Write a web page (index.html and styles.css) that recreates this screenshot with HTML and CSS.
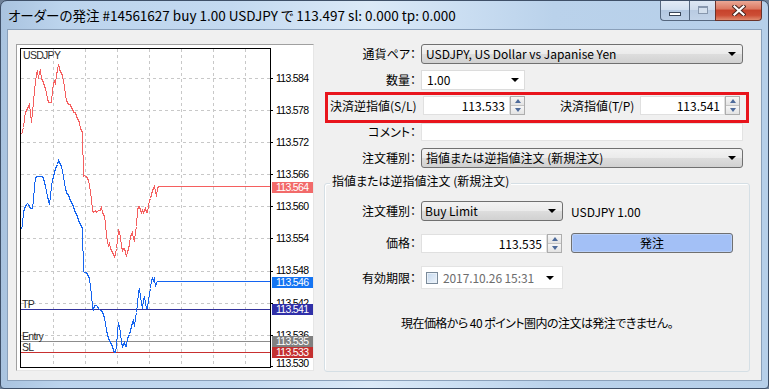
FILE: index.html
```html
<!DOCTYPE html>
<html lang="ja">
<head>
<meta charset="utf-8">
<title>オーダーの発注</title>
<link rel="stylesheet" href="styles.css">
</head>
<body>
<div class="window">
  <div class="titlebar">
    <span class="title">オーダーの発注 #14561627 buy 1.00 USDJPY で 113.497 sl: 0.000 tp: 0.000</span>
    <div class="caption">
      <div class="cbtn min"><span class="min-ico"></span></div>
      <div class="cbtn max"><span class="max-ico"></span></div>
      <div class="cbtn close">
        <svg width="14" height="11" viewBox="0 0 14 11"><path d="M2.5 1.5 L11.5 9.5 M11.5 1.5 L2.5 9.5" stroke="#4a2620" stroke-width="4.2" stroke-linecap="square"/><path d="M2.5 1.5 L11.5 9.5 M11.5 1.5 L2.5 9.5" stroke="#fff" stroke-width="2.2" stroke-linecap="square"/></svg>
      </div>
    </div>
  </div>
  <div class="client">
    <div class="chart-panel">
      <svg class="chart" width="296" height="325" viewBox="17 45 296 325">
        <defs>
          <clipPath id="c542"><rect x="272" y="290" width="41" height="14"/></clipPath>
          <clipPath id="c536"><rect x="272" y="322" width="41" height="14"/></clipPath>
        </defs>
        <rect x="17" y="45" width="296" height="325" fill="#fff"/>
        <g stroke="#c8c8c8" stroke-dasharray="3 3" shape-rendering="crispEdges">
          <path d="M21 78.5H270M21 110.5H270M21 142.5H270M21 174.5H270M21 206.5H270M21 238.5H270M21 271.5H270M21 303.5H270M21 335.5H270"/>
          <path d="M53.5 49V367M85.5 49V367M117.5 49V367M149.5 49V367M181.5 49V367M213.5 49V367M245.5 49V367"/>
        </g>
        <g stroke="#000" shape-rendering="crispEdges">
          <path d="M270 78.5H273M270 110.5H273M270 142.5H273M270 174.5H273M270 206.5H273M270 238.5H273M270 271.5H273M270 303.5H273M270 335.5H273M270 366.5H273"/>
        </g>
        <g class="axis">
          <text x="276" y="82">113.584</text>
          <text x="276" y="114">113.578</text>
          <text x="276" y="146">113.572</text>
          <text x="276" y="178">113.566</text>
          <text x="276" y="210">113.560</text>
          <text x="276" y="242">113.554</text>
          <text x="276" y="274">113.548</text>
          <text x="276" y="307" clip-path="url(#c542)">113.542</text>
          <text x="276" y="339" clip-path="url(#c536)">113.536</text>
          <text x="276" y="367">113.530</text>
        </g>
        <g shape-rendering="crispEdges" fill="none" stroke-width="1">
          <path d="M21 309.5H270" stroke="#33339c"/>
          <path d="M21 341.5H270" stroke="#8c8c8c"/>
          <path d="M21 352.5H270" stroke="#c83030"/>
        </g>
        <g transform="translate(0.5 0.5)" fill="none" stroke-width="1" shape-rendering="crispEdges">
          <polyline stroke="#f55f5f" points="21,134 23,127 24,118 25,112 27,108 28,106 29,104 30,112 31,122 32,112 33,102 34,90 35,82 36,74 37,70 38,78 39,72 40,70 41,78 42,80 43,82 44,86 45,88 46,92 47,98 48,102 49,102 51,102 52,90 53,84 54,80 55,84 56,74 57,70 58,64 59,68 60,72 61,72 62,76 63,80 64,86 65,94 66,100 67,102 68,104 70,104 71,108 72,108 73,112 75,112 76,116 77,118 78,120 79,122 80,128 81,130 82,132 83,176 84,175 85,176 86,176 87,178 88,180 89,184 90,192 91,198 92,210 93,212 95,210 96,212 98,210 100,210 101,206 102,212 103,214 104,216 105,222 106,236 107,240 108,246 109,242 110,248 111,250 112,252 114,256 115,254 116,248 117,240 118,230 119,232 120,236 121,246 122,250 123,248 124,248 125,252 126,256 127,252 128,248 129,244 130,236 131,234 132,232 133,238 134,240 135,232 136,226 137,210 138,206 139,206 140,210 141,212 142,210 143,212 144,210 145,208 146,212 147,212 148,206 149,200 150,198 151,194 152,190 153,188 154,186 155,190 156,196 157,188 158,186 270,186"/>
          <polyline stroke="#1464f0" points="21,229 22,224 23,212 24,208 25,206 26,204 27,203 28,204 29,206 30,208 32,208 33,200 34,186 35,178 36,176 38,176 40,176 42,176 43,178 44,182 45,186 46,190 47,196 48,200 49,204 50,196 51,186 52,180 53,176 54,172 55,168 56,166 57,164 58,160 59,162 60,164 61,166 62,170 63,176 64,182 65,188 66,192 67,194 68,194 69,198 70,200 71,202 72,204 73,206 74,210 75,212 76,214 77,216 78,220 79,222 80,224 81,226 82,228 83,271 84,272 86,272 87,274 88,276 89,278 90,286 91,294 92,307 93,309 94,305 96,305 97,306 98,308 100,310 101,310 102,312 103,314 104,318 105,322 106,330 107,334 108,338 109,340 110,342 111,344 112,346 113,350 114,352 115,352 116,346 117,332 118,322 119,326 120,332 121,342 122,346 123,344 124,342 125,346 126,346 127,338 128,336 129,334 130,330 131,326 132,322 133,320 134,326 135,318 136,312 137,304 138,292 139,288 140,296 141,302 142,308 143,300 144,296 145,302 146,308 147,308 148,300 149,294 150,288 151,280 152,278 153,280 154,278 155,286 156,282 157,281 270,281"/>
        </g>
        <rect x="20.5" y="48.5" width="250" height="319" fill="none" stroke="#000" shape-rendering="crispEdges"/>
        <g class="mk">
          <rect x="272" y="182" width="41" height="11" fill="#f26a6a"/>
          <text x="276" y="191">113.564</text>
          <rect x="272" y="277" width="41" height="11" fill="#1474f2"/>
          <text x="276" y="286">113.546</text>
          <rect x="272" y="304" width="41" height="11" fill="#3030a8"/>
          <text x="276" y="313">113.541</text>
          <rect x="272" y="336" width="41" height="11" fill="#808080"/>
          <text x="276" y="345">113.535</text>
          <rect x="272" y="347" width="41" height="11" fill="#c43030"/>
          <text x="276" y="356">113.533</text>
        </g>
        <g class="lbls">
          <text x="23" y="59">USDJPY</text>
          <text x="22" y="307.5">TP</text>
          <text x="22" y="340">Entry</text>
          <text x="22" y="351">SL</text>
        </g>
      </svg>
    </div>
    <div class="form">
      <div class="row">
        <span class="lbl">通貨ペア：</span>
        <div class="combo wide"><span>USDJPY, US Dollar vs Japanise Yen</span><i class="arrow"></i></div>
      </div>
      <div class="row r2">
        <span class="lbl">数量：</span>
        <div class="combo edit qty"><span>1.00</span><i class="arrow"></i></div>
      </div>
      <div class="slbox">
        <span class="sl-lbl">決済逆指値(S/L)</span>
        <div class="num sl-in">113.533</div>
        <div class="spin"><b class="up"><i></i></b><b class="dn"><i></i></b></div>
        <span class="tp-lbl">決済指値(T/P)</span>
        <div class="num tp-in">113.541</div>
        <div class="spin"><b class="up"><i></i></b><b class="dn"><i></i></b></div>
      </div>
      <div class="row">
        <span class="lbl">コメント：</span>
        <div class="text-in"></div>
      </div>
      <div class="row r5">
        <span class="lbl">注文種別：</span>
        <div class="combo wide"><span>指値または逆指値注文 (新規注文)</span><i class="arrow"></i></div>
      </div>
      <div class="group">
        <span class="group-title">指値または逆指値注文 (新規注文)</span>
        <div class="row g1">
          <span class="lbl g">注文種別：</span>
          <div class="combo mid"><span>Buy Limit</span><i class="arrow"></i></div>
          <span class="sym">USDJPY 1.00</span>
        </div>
        <div class="row g2">
          <span class="lbl g">価格：</span>
          <div class="num price-in">113.535</div>
          <div class="spin"><b class="up"><i></i></b><b class="dn"><i></i></b></div>
          <div class="btn">発注</div>
        </div>
        <div class="row g3">
          <span class="lbl g">有効期限：</span>
          <div class="date">
            <span class="chk"></span>
            <span class="dtxt">2017.10.26 15:31</span>
            <i class="arrow"></i>
          </div>
        </div>
        <p class="msg">現在価格から 40 ポイント圏内の注文は発注できません。</p>
      </div>
    </div>
  </div>
</div>
</body>
</html>
```

FILE: styles.css
```css
* { box-sizing: border-box; }
html, body { margin: 0; padding: 0; }
body {
  width: 769px;
  height: 389px;
  overflow: hidden;
  background: #6f8198;
  font-family: "Noto Sans CJK JP", sans-serif;
  font-size: 12px;
  color: #000;
  font-feature-settings: "palt";
}
.window {
  width: 769px;
  height: 389px;
  border: 1px solid #3f5068;
  border-radius: 7px 7px 4px 4px;
  background: linear-gradient(to right, #a9c3df 0%, #bcd4ed 8%, #c3d9f0 30%, #dbe9f7 48%, #d0e2f4 56%, #bad2eb 72%, #b6cfe9 100%);
  display: flex;
  flex-direction: column;
}
.titlebar {
  height: 28px;
  flex: none;
  display: flex;
  justify-content: space-between;
  align-items: flex-start;
}
.title {
  margin: 5px 0 0 7px;
  font-size: 13.5px;
  line-height: 18px;
  white-space: nowrap;
}
.caption {
  display: flex;
  margin-right: 6px;
  height: 20px;
}
.cbtn {
  height: 20px;
  border: 1px solid #55677f;
  border-top: none;
  display: flex;
  align-items: center;
  justify-content: center;
}
.cbtn.min {
  width: 29px;
  border-right: none;
  border-radius: 0 0 0 4px;
  background: linear-gradient(#e2ebf6 0%, #d2e0f0 45%, #b4c8e1 50%, #bccfe6 100%);
  align-items: flex-end;
  padding-bottom: 4px;
}
.min-ico {
  width: 12px;
  height: 4px;
  background: #fff;
  border: 1px solid #3a4658;
}
.cbtn.max {
  width: 26px;
  border-right: none;
  background: linear-gradient(#dde7f3 0%, #cfdcec 45%, #b9cbe2 50%, #c2d3e8 100%);
}
.max-ico {
  width: 10px;
  height: 8px;
  border: 1px solid #8797ad;
  border-top-width: 2px;
  background: #d3dfed;
  margin-top: -2px;
}
.cbtn.close {
  width: 47px;
  border-color: #6b3229;
  border-radius: 0 0 4px 0;
  background: linear-gradient(#eaa896 0%, #dc7a63 40%, #c7432c 50%, #cc4d35 75%, #e08a6e 100%);
}
.client {
  flex: 1;
  margin: 0 6px 7px 6px;
  border: 1px solid #8aa0ba;
  background: #f0f0f0;
  display: flex;
  align-items: flex-start;
  padding: 14px 0 0 8px;
}
.chart-panel {
  width: 298px;
  height: 327px;
  flex: none;
  border: 1px solid #a0a0a0;
  border-right-color: #e6e6e6;
  border-bottom-color: #e6e6e6;
  background: #fff;
}
.chart { display: block; }
.chart text {
  font-family: "Liberation Sans", Arial, sans-serif;
  font-size: 10.5px;
  letter-spacing: -0.7px;
}
.axis text { fill: #000; }
.mk text { fill: #fff; }
.lbls text { fill: #2b2b2b; }

.form {
  margin-left: 10px;
  width: 426px;
  flex: none;
  display: flex;
  flex-direction: column;
}
.row {
  display: flex;
  align-items: center;
}
.lbl {
  width: 92px;
  flex: none;
  margin-right: 5px;
  text-align: right;
  line-height: 16px;
  white-space: nowrap;
}
.lbl.g { width: 91px; }
.r2 { margin-top: 6px; }
.r5 { margin-top: 7px; }

.combo {
  height: 20px;
  border: 1px solid #707070;
  border-radius: 3px;
  background: linear-gradient(#f3f3f3 0%, #ebebeb 48%, #dddddd 52%, #d1d1d1 100%);
  display: flex;
  align-items: center;
  justify-content: space-between;
  padding: 0 6px 0 4px;
  line-height: 16px;
  white-space: nowrap;
}
.combo.wide { width: 322px; }
.combo.edit {
  background: #fff;
  border: 1px solid #dcdcdc;
  border-radius: 0;
}
.combo.qty { width: 104px; padding-left: 5px; padding-right: 5px; }
.combo.mid { width: 142px; padding-left: 3px; }
.arrow {
  width: 0;
  height: 0;
  border-left: 4px solid transparent;
  border-right: 4px solid transparent;
  border-top: 4px solid #000;
  flex: none;
}

.slbox {
  margin: 2px 0 0 1px;
  width: 424px;
  height: 31px;
  border: 3px solid #e8141c;
  display: flex;
  align-items: flex-start;
  padding: 1px 0 0 2px;
}
.sl-lbl {
  width: 93px;
  flex: none;
  line-height: 19px;
  white-space: nowrap;
}
.tp-lbl {
  width: 80px;
  margin-left: 35px;
  flex: none;
  line-height: 19px;
  white-space: nowrap;
}
.num {
  height: 19px;
  background: #fff;
  border: 1px solid #e0e0e0;
  text-align: right;
  padding-right: 4px;
  line-height: 17px;
  flex: none;
}
.sl-in { width: 87px; }
.tp-in { width: 85px; }
.price-in { width: 126px; }
.spin {
  width: 15px;
  height: 19px;
  flex: none;
  display: flex;
  flex-direction: column;
  border: 1px solid #adadad;
  background: #f0f0f0;
}
.spin b {
  flex: 1;
  display: flex;
  align-items: center;
  justify-content: center;
  background: linear-gradient(#f7f7f7, #e3e3e3);
}
.spin b.up { border-bottom: 1px solid #c4c4c4; }
.spin b i {
  width: 0;
  height: 0;
  border-left: 3.5px solid transparent;
  border-right: 3.5px solid transparent;
}
.spin b.up i { border-bottom: 4px solid #4d6a9a; }
.spin b.dn i { border-top: 4px solid #4d6a9a; }

.text-in {
  width: 322px;
  height: 18px;
  background: #fff;
  border: 1px solid #e3e3e3;
}

.group {
  margin-top: 15px;
  width: 426px;
  height: 189px;
  border: 1px solid #d5dfe5;
  border-radius: 3px;
  box-shadow: inset 1px 1px 0 #fff;
  display: flex;
  flex-direction: column;
}
.group-title {
  align-self: flex-start;
  margin: -11px 0 0 5px;
  padding: 0 2px;
  background: #f0f0f0;
  line-height: 16px;
  white-space: nowrap;
}
.g1 { margin-top: 12px; }
.g2 { margin-top: 12px; }
.g3 { margin-top: 13px; }
.sym { margin-left: 8px; white-space: nowrap; }
.btn {
  margin-left: 9px;
  width: 162px;
  height: 20px;
  border: 1px solid #707070;
  border-radius: 3px;
  background: #a3c0f6;
  box-shadow: inset 0 0 0 1px #b8cff8;
  text-align: center;
  line-height: 18px;
}
.date {
  width: 142px;
  height: 23px;
  background: #fff;
  border: 1px solid #e3e3e3;
  display: flex;
  align-items: center;
  padding-left: 4px;
}
.chk {
  width: 12px;
  height: 12px;
  flex: none;
  border: 1px solid #7a8a9a;
  background: linear-gradient(135deg, #c4d8ee, #eef4fb);
  box-shadow: inset 0 0 0 1px #e8f0f8;
}
.dtxt {
  margin-left: 5px;
  color: #6d6d6d;
  white-space: nowrap;
  letter-spacing: -0.1px;
}
.date .arrow { margin-left: 12px; }
.msg {
  margin: 26px 0 0 0;
  text-align: center;
  line-height: 16px;
  white-space: nowrap;
  letter-spacing: -0.55px;
}
```
